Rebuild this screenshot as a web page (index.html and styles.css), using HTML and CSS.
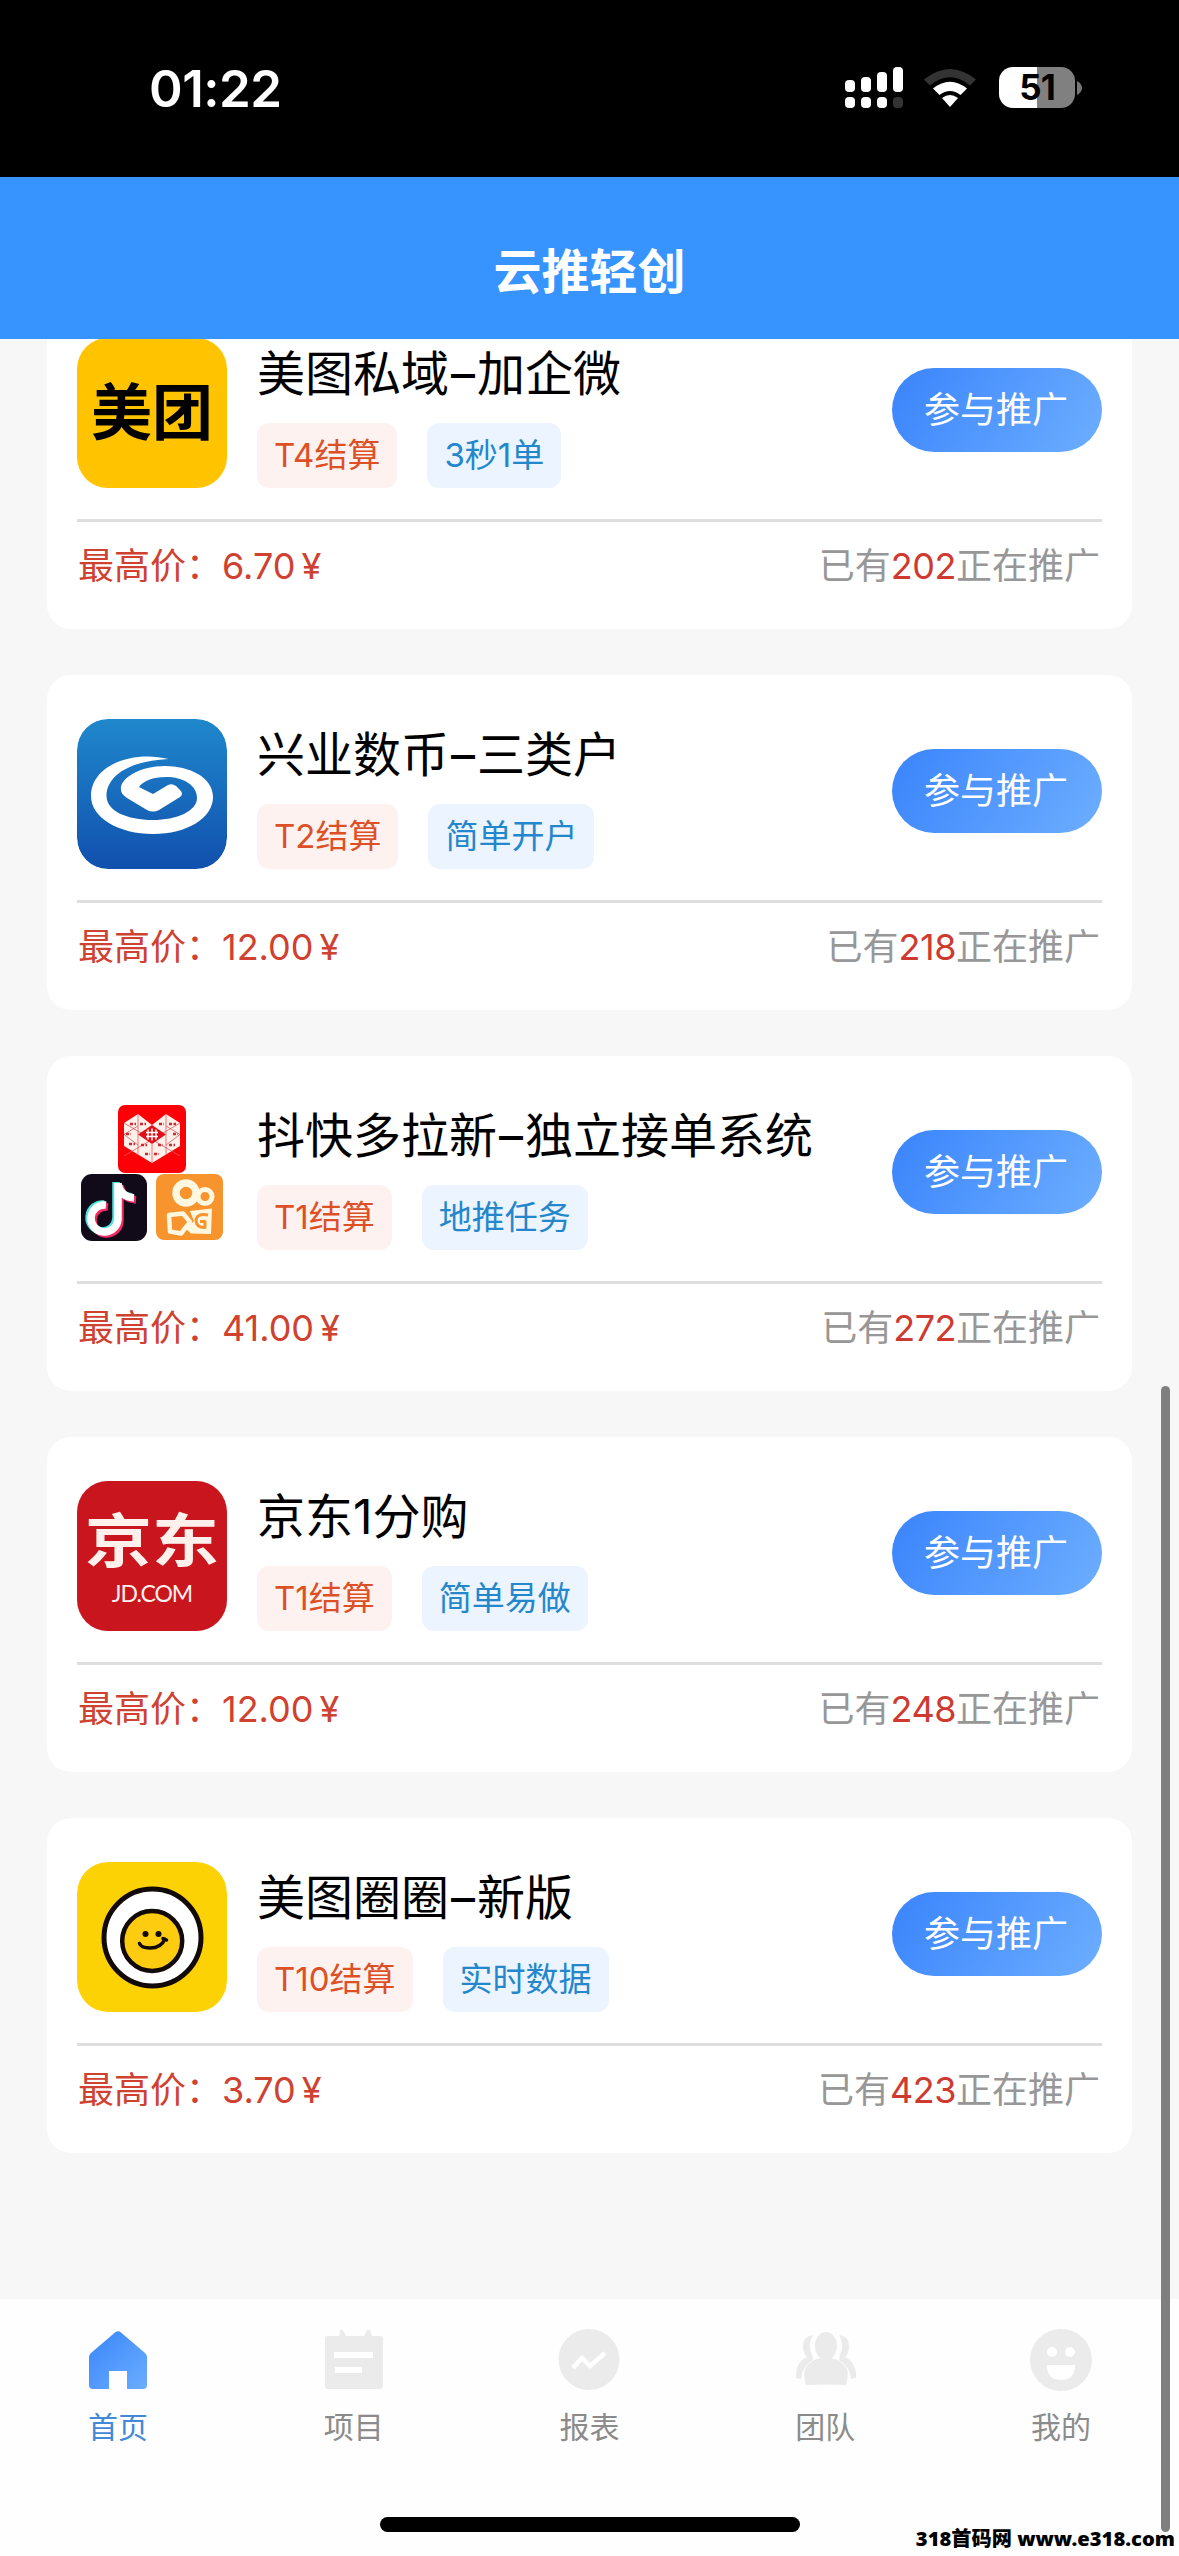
FILE: index.html
```html
<!DOCTYPE html>
<html lang="zh-CN">
<head>
<meta charset="utf-8">
<title>云推轻创</title>
<link rel="stylesheet" href="styles.css">
</head>
<body>
<div class="phone">
  <div class="status">
    <span class="time">01:22</span>
    <div class="status-icons">
      <svg class="signal" width="58" height="41" viewBox="0 0 58 41">
        <g fill="#fff">
          <rect x="0" y="13" width="10" height="12" rx="4"/><rect x="16" y="10" width="10" height="15" rx="4"/>
          <rect x="32" y="5" width="10" height="20" rx="4"/><rect x="48" y="0" width="10" height="25" rx="4"/>
          <rect x="0" y="30" width="10" height="11" rx="4"/><rect x="16" y="30" width="10" height="11" rx="4"/>
          <rect x="32" y="30" width="10" height="11" rx="4"/>
        </g>
        <rect x="48" y="30" width="10" height="11" rx="4" fill="#333"/>
      </svg>
      <svg class="wifi" width="52" height="38" viewBox="0 0 52 38">
        <path d="M0 10.500Q26 -10.500 52 10.500L46 16.500Q26 0 6 16.500Z" fill="#333"/>
        <path d="M9 19.500Q26 6 43 19.500L36.500 26Q26 18 15.500 26Z" fill="#fff"/>
        <path d="M18 29Q26 23 34 29L26 38Z" fill="#fff"/>
      </svg>
      <div class="battery">51</div>
      <svg width="5" height="14" viewBox="0 0 5 14"><path d="M0 0Q5 3 5 7T0 14Z" fill="#777"/></svg>
    </div>
  </div>

  <header class="header">云推轻创</header>

  <main class="list">
    <section class="card">
      <div class="card-top">
        <div class="logo meituan">美团</div>
        <div class="info">
          <h2 class="name">美图私域<i>–</i>加企微</h2>
          <div class="tags"><span class="tag settle">T4结算</span><span class="tag note">3秒1单</span></div>
        </div>
        <button class="join">参与推广</button>
      </div>
      <div class="card-bottom"><span class="price">最高价：6.70<b>¥</b></span><span class="count">已有<em>202</em>正在推广</span></div>
    </section>

    <section class="card">
      <div class="card-top">
        <svg class="logo" viewBox="0 0 150 150">
          <defs><linearGradient id="bank" x1="0" y1="0" x2="0" y2="1"><stop offset="0" stop-color="#1f88cc"/><stop offset="1" stop-color="#1150ae"/></linearGradient></defs>
          <rect width="150" height="150" rx="31" fill="url(#bank)"/>
          <path fill="#fff" d="M91.500 40C56 31 14 46 14 77C14 99 42 115 76 115C110 115 136 99 136 78C136 58 112 47 88 47C62 47 42 60 44 71C44 74 46 76 50 79L70 91Q76 94 82 91L103 78Q107 75 103 71L99 67Q95 64 91 66L76 75L62 68C66 62 76 58 89 58C106 58 120 66 120 79C120 92 100 101 76 101C50 101 29.500 92 29.500 77C29.500 58 50 42 91.500 40Z"/>
        </svg>
        <div class="info">
          <h2 class="name">兴业数币<i>–</i>三类户</h2>
          <div class="tags"><span class="tag settle">T2结算</span><span class="tag note">简单开户</span></div>
        </div>
        <button class="join">参与推广</button>
      </div>
      <div class="card-bottom"><span class="price">最高价：12.00<b>¥</b></span><span class="count">已有<em>218</em>正在推广</span></div>
    </section>

    <section class="card">
      <div class="card-top">
        <svg class="logo" viewBox="0 0 150 150">
          <rect x="41" y="5" width="68" height="68" rx="7" fill="#fb0007"/>
          <path d="M61 14L47 23V46L75 63L103 46V23L89 14L75 25Z" fill="#fff0ea"/>
          <path d="M61 14V54.500M89 14V54.500M47 23L103 56M103 23L47 56M47 34.500L61 45M103 34.500L89 45M61 26L47 34.500M89 26L103 34.500M75 44V63" stroke="#e2555a" stroke-width=".8" fill="none"/>
          <path d="M75 25L89 34.500L75 44L61 34.500Z" fill="#e0101a"/>
          <path d="M71 29.500V39.500M75 28.500V40.500M79 29.500V39.500M69 32.500H81M69 36.500H81" stroke="#fff" stroke-width="1.400"/>
          <g stroke="#c92a36" stroke-width="2.500" stroke-dasharray="3 1.500">
            <path d="M53 24H59M63 24H69M82 24H87M92 24H99M49 34H54M96 34H101M52 44H58M64 45H70M81 45H86M92 45H98M68 54H73M77 54H82"/>
          </g>
          <rect x="4" y="74" width="66" height="67" rx="11" fill="#110b19"/>
          <g fill="none" stroke-width="7.500">
            <path d="M41 83V119A13.500 13.500 0 1 1 29 105M41 84Q44 97 57 98" stroke="#f12b62" transform="translate(2 2)"/>
            <path d="M41 83V119A13.500 13.500 0 1 1 29 105M41 84Q44 97 57 98" stroke="#4de3df" transform="translate(-2 -1)"/>
            <path d="M41 83V119A13.500 13.500 0 1 1 29 105M41 84Q44 97 57 98" stroke="#fff"/>
          </g>
          <rect x="79" y="74" width="67" height="66" rx="8" fill="#f8942e"/>
          <g fill="none" stroke="#fff7df" stroke-linejoin="round">
            <circle cx="109" cy="93" r="10" stroke-width="7.500"/>
            <circle cx="128" cy="96.500" r="7" stroke-width="5"/>
            <path d="M92 115L106 113.500L113 122L104 133.500L93 131.500Z" stroke-width="4.500"/>
            <path d="M113 111L135 108.500L134 134L114 133.500L109 129L117 121Z" fill="#fff7df" stroke="none"/>
            <path d="M131 115Q119 113 119 121Q120 128 128 127.500V121.500H123" stroke="#f8942e" stroke-width="3"/>
          </g>
        </svg>
        <div class="info">
          <h2 class="name">抖快多拉新<i>–</i>独立接单系统</h2>
          <div class="tags"><span class="tag settle">T1结算</span><span class="tag note">地推任务</span></div>
        </div>
        <button class="join">参与推广</button>
      </div>
      <div class="card-bottom"><span class="price">最高价：41.00<b>¥</b></span><span class="count">已有<em>272</em>正在推广</span></div>
    </section>

    <section class="card">
      <div class="card-top">
        <div class="logo jd"><span class="jd-cn">京东</span><span class="jd-en">JD.COM</span></div>
        <div class="info">
          <h2 class="name">京东1分购</h2>
          <div class="tags"><span class="tag settle">T1结算</span><span class="tag note">简单易做</span></div>
        </div>
        <button class="join">参与推广</button>
      </div>
      <div class="card-bottom"><span class="price">最高价：12.00<b>¥</b></span><span class="count">已有<em>248</em>正在推广</span></div>
    </section>

    <section class="card">
      <div class="card-top">
        <svg class="logo" viewBox="0 0 150 150">
          <rect width="150" height="150" rx="31" fill="#fdd205"/>
          <circle cx="75.500" cy="75.500" r="48.500" fill="#fff" stroke="#120a08" stroke-width="5"/>
          <circle cx="75.200" cy="79" r="30" fill="#fdcb10" stroke="#120a08" stroke-width="4.500"/>
          <circle cx="68.500" cy="72" r="3" fill="#120a08"/><circle cx="81.500" cy="72" r="3" fill="#120a08"/>
          <path d="M62.500 81.500Q64 86 73 86Q84 86 88 77M86 76.500L89.500 78" fill="none" stroke="#120a08" stroke-width="3.500" stroke-linecap="round"/>
        </svg>
        <div class="info">
          <h2 class="name">美图圈圈<i>–</i>新版</h2>
          <div class="tags"><span class="tag settle">T10结算</span><span class="tag note">实时数据</span></div>
        </div>
        <button class="join">参与推广</button>
      </div>
      <div class="card-bottom"><span class="price">最高价：3.70<b>¥</b></span><span class="count">已有<em>423</em>正在推广</span></div>
    </section>
  </main>

  <nav class="tabbar">
    <a class="tab active">
      <svg viewBox="0 0 66 66"><defs><linearGradient id="home" x1="0" y1="0" x2="1" y2="1"><stop offset="0" stop-color="#3a86fa"/><stop offset="1" stop-color="#6aadff"/></linearGradient></defs>
        <path fill="url(#home)" d="M30 5.500Q33 3 36 5.500L60 26Q62 28 62 30V58Q62 62 58 62H42V44H24V62H8Q4 62 4 58V30Q4 28 6 26Z"/></svg>
      首页</a>
    <a class="tab">
      <svg viewBox="0 0 66 66"><path fill="#ebebeb" d="M6 9H17Q19 9 19 3H22L25 9H43L46 3H49L51 9H60Q62 9 62 12V59Q62 62 59 62H7Q4 62 4 59V11Q4 9 6 9Z"/><path d="M13 28H52M14 43H41" stroke="#fff" stroke-width="6"/></svg>
      项目</a>
    <a class="tab">
      <svg viewBox="0 0 66 66"><circle cx="33" cy="32.500" r="30.500" fill="#ebebeb"/><path d="M17 41L26 31L34 39L49 26" fill="none" stroke="#fff" stroke-width="4.500"/></svg>
      报表</a>
    <a class="tab">
      <svg viewBox="0 0 66 66"><g fill="#ebebeb"><ellipse cx="34" cy="19" rx="11" ry="14"/><path d="M14 58Q9 42 18 36Q23 31 34 31T50 36Q59 42 54 58Q34 57 14 58Z"/>
        <path d="M21 8Q11 9 11 20Q11 26 15 30Q3 36 4 51L9 52Q10 39 21 33L20 28Q15 18 21 8ZM47 8Q57 9 57 20Q57 26 53 30Q65 36 64 51L59 52Q58 39 47 33L48 28Q53 18 47 8Z"/></g></svg>
      团队</a>
    <a class="tab">
      <svg viewBox="0 0 66 66"><circle cx="33" cy="33" r="31" fill="#ebebeb"/><circle cx="24" cy="25" r="5" fill="#fff"/><circle cx="42" cy="25" r="5" fill="#fff"/><path d="M19 38H47Q47 53 33 53T19 38Z" fill="#fff"/></svg>
      我的</a>
  </nav>
  <div class="home-indicator"></div>
  <div class="scroll-thumb"></div>
  <div class="watermark">318首码网 www.e318.com</div>
</div>
</body>
</html>
```
FILE: styles.css
```css
* { box-sizing: border-box; }
body { margin: 0; }
.phone {
  position: relative;
  display: flex;
  flex-direction: column;
  width: 1179px;
  height: 2556px;
  overflow: hidden;
  background: #f7f7f7;
  font-family: Inter, "Noto Sans CJK SC", sans-serif;
  color: #000;
}

/* status bar */
.status {
  display: flex;
  justify-content: space-between;
  flex: none;
  height: 177px;
  padding: 67px 97px 0 149px;
  background: #000;
}
.time { color: #fff; font-size: 51px; font-weight: 600; line-height: 43px; letter-spacing: -.5px; }
.status-icons { display: flex; align-items: center; height: 41px; }
.wifi { margin: 0 23px 0 21px; }
.battery {
  width: 76px;
  height: 41px;
  margin-right: 2px;
  border-radius: 14px;
  background: linear-gradient(90deg, #fff 50%, #808080 50%);
  font-size: 35px;
  font-weight: 700;
  line-height: 41px;
  text-align: center;
  letter-spacing: -1px;
}

.header {
  flex: none;
  height: 162px;
  padding-top: 59px;
  background: #3794fe;
  color: #fff;
  font-size: 48px;
  font-weight: 700;
  line-height: 72px;
  text-align: center;
}

/* project list */
.list {
  display: flex;
  flex: 1;
  flex-direction: column;
  gap: 46px;
  min-height: 0;
  padding: 0 47px;
  overflow: hidden;
}
.card {
  flex: none;
  height: 335px;
  padding: 44px 30px 0;
  border-radius: 24px;
  background: #fff;
}
.card:first-child { margin-top: -45px; }
.card-top {
  display: flex;
  align-items: flex-start;
  height: 184px;
  border-bottom: 3px solid #dedede;
}
.logo { flex: none; width: 150px; height: 150px; margin-right: 30px; border-radius: 31px; }
.meituan { background: #ffc300; font-size: 61px; font-weight: 700; line-height: 150px; text-align: center; }
.jd {
  display: flex;
  flex-direction: column;
  align-items: center;
  background: #c9151e;
  color: #fff0ec;
}
.jd-cn { margin-top: 28px; font-size: 65px; font-weight: 700; line-height: 64px; transform: scale(1.03, .9); }
.jd-en { margin-top: 7px; font-family: Lato, sans-serif; font-size: 23px; line-height: 26px; letter-spacing: -1px; }
.info { display: flex; flex: 1; flex-direction: column; justify-content: space-between; height: 150px; }
.name { margin: 0; font-size: 48px; font-weight: 400; line-height: 71px; white-space: nowrap; }
.name i { display: inline-block; width: 28px; font-style: normal; text-align: center; }
.tags { display: flex; gap: 30px; }
.tag { height: 65px; padding: 0 17px; border-radius: 12px; font-size: 33px; line-height: 65px; }
.settle { background: #fef2f1; color: #dd5026; }
.note { background: #ebf4ff; color: #2587cb; }
.join {
  flex: none;
  width: 210px;
  height: 84px;
  margin: 30px 0 0;
  padding: 0 2px 0 0;
  border: 0;
  border-radius: 42px;
  background: linear-gradient(120deg, #3a84fc, #6caeff);
  color: #fff;
  font: 400 36px/82px Inter, "Noto Sans CJK SC", sans-serif;
}
.card-bottom { display: flex; justify-content: space-between; padding: 0 2px 0 1px; font-size: 36px; line-height: 88px; }
.price { color: #cf4130; }
.price b { margin-left: 6px; font-weight: 400; }
.count { color: #979797; }
.count em { color: #cf3a30; font-style: normal; letter-spacing: -.5px; }

/* bottom navigation */
.tabbar { display: flex; flex: none; height: 257px; padding-top: 28px; background: #fefefe; }
.tab {
  display: flex;
  flex: 1;
  flex-direction: column;
  align-items: center;
  gap: 12px;
  color: #8b8b8b;
  font-size: 30px;
  line-height: 44px;
}
.tab svg { width: 66px; height: 66px; }
.tab.active { color: #4289d8; }

/* overlays */
.home-indicator { position: absolute; bottom: 24px; left: 380px; width: 420px; height: 15px; border-radius: 8px; background: #000; }
.scroll-thumb { position: absolute; top: 1386px; right: 9px; width: 9px; height: 1146px; border-radius: 5px; background: #7f7f7f; }
.watermark {
  position: absolute;
  right: 4px;
  bottom: 4px;
  font-family: "Noto Sans", "Noto Sans CJK SC", sans-serif;
  font-size: 20.200px;
  font-weight: 900;
  line-height: 28px;
  white-space: nowrap;
}
```
